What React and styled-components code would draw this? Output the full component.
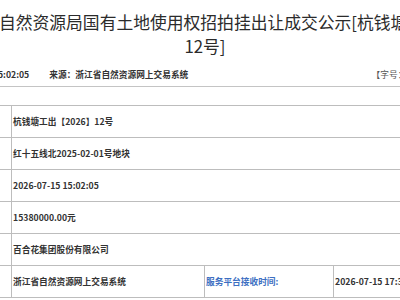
import React from 'react';
import styled, { createGlobalStyle } from 'styled-components';

const GlobalStyle = createGlobalStyle`
  html, body {
    margin: 0;
    padding: 0;
    background: #fff;
  }
  body {
    font-family: "Noto Sans CJK SC", "Microsoft YaHei", sans-serif;
    color: #333;
  }
`

// the notice is wider than the window; it sits centred and spills out on both sides
const Page = styled.div`
  width: 400px;
  height: 300px;
  overflow: hidden;
  box-sizing: border-box;
  padding-left: 10px;
  display: flex;
  justify-content: center;
`

const Article = styled.div`
  flex: none;
  width: 720px;
`

const Title = styled.h1`
  width: 622px;
  margin: 0 auto;
  padding-top: 11px;
  font-size: 16.8px;
  line-height: 23.5px;
  font-weight: normal;
  text-align: center;
  color: #2b2b2b;
`

const Meta = styled.div`
  display: flex;
  align-items: center;
  height: 24px;
  margin-top: 4px;
  padding: 0 120px 0 55px;
  gap: 20px;
  border-bottom: 1px solid #c4c4c4;
  font-size: 8.7px;
  font-weight: bold;
  color: #333;
  white-space: nowrap;
`

const FontSizer = styled.span`
  margin-left: auto;
  font-weight: normal;
  color: #555;
`

const Table = styled.table`
  width: 100%;
  margin-top: 18px;
  border-collapse: collapse;
  table-layout: fixed;
`

const Cell = styled.td`
  height: 31px;
  padding: 0 2px 0 1px;
  border: 1px solid #bdbdbd;
  font-size: 8.7px;
  font-weight: bold;
  color: ${({ $label }) => ($label ? '#3d6fc2' : '#333')};
  white-space: nowrap;
  overflow: hidden;
  vertical-align: middle;
`

const rows = [
  ['公告编号：', '杭钱塘工出【2026】12号'],
  ['地块名称：', '红十五线北2025-02-01号地块'],
  ['成交时间：', '2026-07-15 15:02:05'],
  ['成交价格：', '15380000.00元'],
  ['竞得人：', '百合花集团股份有限公司'],
];

export default function App() {
  return (
    <>
      <GlobalStyle />
      <Page>
        <Article>
          <Title>
            杭州市规划和自然资源局国有土地使用权招拍挂出让成交公示[杭钱塘工出【2026】12号]
          </Title>
          <Meta>
            <span>发布时间：2026-07-15 15:02:05</span>
            <span>来源：浙江省自然资源网上交易系统</span>
            <FontSizer>【字号：大 中 小】</FontSizer>
          </Meta>
          <Table>
            <colgroup>
              <col style={{ width: 166 }} />
              <col style={{ width: 193 }} />
              <col style={{ width: 129 }} />
              <col />
            </colgroup>
            <tbody>
              {rows.map(([label, value]) => (
                <tr key={label}>
                  <Cell $label>{label}</Cell>
                  <Cell colSpan={3}>{value}</Cell>
                </tr>
              ))}
              <tr>
                <Cell $label>交易系统：</Cell>
                <Cell>浙江省自然资源网上交易系统</Cell>
                <Cell $label>服务平台接收时间:</Cell>
                <Cell>2026-07-15 17:30:12</Cell>
              </tr>
            </tbody>
          </Table>
        </Article>
      </Page>
    </>
  );
}
